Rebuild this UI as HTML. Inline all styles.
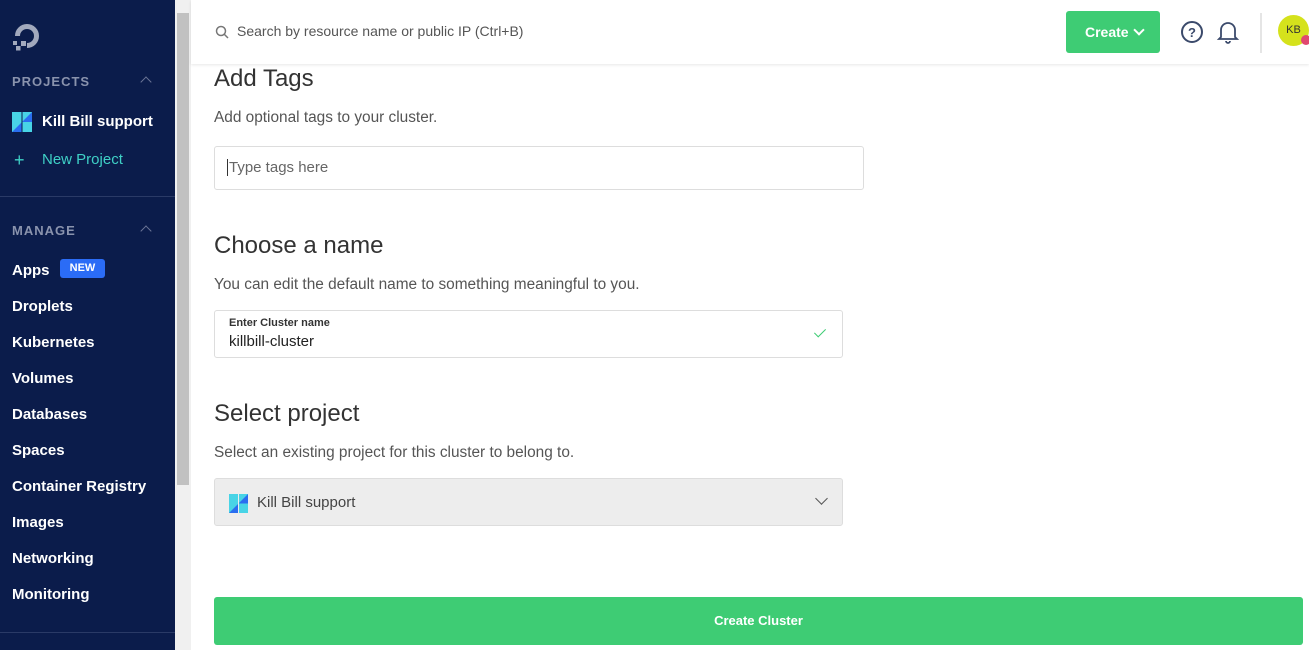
<!DOCTYPE html>
<html><head><style>
*{margin:0;padding:0;box-sizing:border-box}
body{width:1309px;height:650px;overflow:hidden;font-family:"Liberation Sans",sans-serif;background:#fff;position:relative}
.sb{position:absolute;left:0;top:0;width:175px;height:650px;background:#0b1c4b;color:#fff}
.sb .h{position:absolute;left:12px;font-size:13px;font-weight:bold;letter-spacing:1px;color:#8a93ad}
.sb .car{position:absolute;left:142px;width:8px;height:8px;border-left:1.5px solid #6b7596;border-top:1.5px solid #6b7596;transform:rotate(45deg)}
.sb .it{position:absolute;left:12px;font-size:15px;font-weight:bold}
.scr{position:absolute;left:175px;top:0;width:16px;height:650px;background:#f0f0f0}
.thumb{position:absolute;left:177px;top:13px;width:12px;height:472px;background:#c1c1c1}
.top{position:absolute;left:191px;top:0;right:0;height:64px;background:#fff;box-shadow:0 1px 3px rgba(0,0,0,.1)}
h2{position:absolute;left:214px;font-size:24px;font-weight:normal;color:#333}
.p{position:absolute;left:214px;font-size:15.4px;color:#555}
.inp{position:absolute;left:214px;border:1px solid #ddd;border-radius:3px;background:#fff}
</style></head><body>
<div class="sb">
<svg style="position:absolute;left:10px;top:20px" width="34" height="34" viewBox="0 0 34 34"><path d="M7.5 16 A9.5 9.5 0 1 1 17 25.5" fill="none" stroke="#a2a9bd" stroke-width="5"/><rect x="11" y="21" width="5" height="5" fill="#a2a9bd"/><rect x="6" y="26" width="4.5" height="4.5" fill="#a2a9bd"/><rect x="3" y="21" width="4" height="4" fill="#a2a9bd"/></svg>
<div class="h" style="top:74px">PROJECTS</div><div class="car" style="top:78px"></div>
<svg style="position:absolute;left:12px;top:112px" width="20" height="20"><rect width="20" height="20" fill="#48d4e6"/><path d="M0 20 L10 10 V20Z M10 10 L20 0 V10Z" fill="#2a6ef0"/><path d="M10 0 V20" stroke="#0b1c4b" stroke-width="1"/></svg>
<div class="it" style="left:42px;top:113px">Kill Bill support</div>
<div class="it" style="left:14px;top:150px;color:#3fd0c6;font-weight:normal;font-size:18px">+</div>
<div class="it" style="left:42px;top:151px;color:#3fd0c6;font-weight:normal">New Project</div>
<div style="position:absolute;left:0;top:196px;width:175px;height:1px;background:#2a3a66"></div>
<div class="h" style="top:223px">MANAGE</div><div class="car" style="top:227px"></div>
<div class="it" style="top:262px">Apps</div>
<div style="position:absolute;left:60px;top:259px;width:45px;height:19px;background:#2b6cf6;border-radius:3px;font-size:11px;font-weight:bold;text-align:center;line-height:19px">NEW</div>
<div class="it" style="top:298px">Droplets</div>
<div class="it" style="top:334px">Kubernetes</div>
<div class="it" style="top:370px">Volumes</div>
<div class="it" style="top:406px">Databases</div>
<div class="it" style="top:442px">Spaces</div>
<div class="it" style="top:478px">Container Registry</div>
<div class="it" style="top:514px">Images</div>
<div class="it" style="top:550px">Networking</div>
<div class="it" style="top:586px">Monitoring</div>
<div style="position:absolute;left:0;top:632px;width:175px;height:1px;background:#2a3a66"></div>
</div>
<div class="scr"></div><div class="thumb"></div>
<div class="top">
<svg style="position:absolute;left:24px;top:25px" width="14" height="14"><circle cx="6" cy="6" r="4.5" fill="none" stroke="#777" stroke-width="1.5"/><path d="M9 9l4 4" stroke="#777" stroke-width="1.5"/></svg>
<div style="position:absolute;left:46px;top:23px;font-size:14px;color:#555">Search by resource name or public IP (Ctrl+B)</div>
<div style="position:absolute;left:875px;top:11px;width:94px;height:42px;background:#3ecc74;border-radius:3px;color:#fff;font-weight:bold;font-size:14px;line-height:42px;padding-left:19px">Create<span style="display:inline-block;width:8px;height:8px;border-right:2px solid #fff;border-bottom:2px solid #fff;transform:rotate(45deg);margin-left:6px;position:relative;top:-3px"></span></div>
<svg style="position:absolute;left:989px;top:20px" width="24" height="24"><circle cx="12" cy="12" r="10" fill="none" stroke="#3b4a6b" stroke-width="2"/><text x="12" y="17" font-size="13" font-weight="bold" text-anchor="middle" fill="#3b4a6b" font-family="Liberation Sans">?</text></svg>
<svg style="position:absolute;left:1025px;top:19px" width="24" height="26"><path d="M5 18 V11 A7 7 0 0 1 19 11 V18 L21 20 H3Z" fill="none" stroke="#3b4a6b" stroke-width="1.8"/><path d="M10 22a2 2 0 0 0 4 0" fill="none" stroke="#3b4a6b" stroke-width="1.8"/></svg>
<div style="position:absolute;left:1069px;top:13px;width:2px;height:40px;background:#e5e5e5"></div>
<div style="position:absolute;left:1087px;top:15px;width:31px;height:31px;border-radius:50%;background:#d5e21c;font-size:11px;color:#333;text-align:center;line-height:31px">KB</div>
<div style="position:absolute;left:1110px;top:35px;width:10px;height:10px;border-radius:50%;background:#e04870"></div>
</div>
<h2 style="top:65px">Add Tags</h2>
<div class="p" style="top:109px">Add optional tags to your cluster.</div>
<div class="inp" style="top:146px;width:650px;height:44px"><div style="position:absolute;left:12px;top:12px;font-size:15px;color:#666;border-left:1px solid #333;padding-left:1px">Type tags here</div></div>
<h2 style="top:232px">Choose a name</h2>
<div class="p" style="top:276px">You can edit the default name to something meaningful to you.</div>
<div class="inp" style="top:310px;width:629px;height:48px"><div style="position:absolute;left:14px;top:6px;font-size:11px;font-weight:bold;color:#333">Enter Cluster name</div><div style="position:absolute;left:14px;top:22px;font-size:15px;color:#222">killbill-cluster</div><div style="position:absolute;left:602px;top:15px;width:6px;height:11px;border-right:1.5px solid #3ecc74;border-bottom:1.5px solid #3ecc74;transform:rotate(45deg)"></div></div>
<h2 style="top:400px">Select project</h2>
<div class="p" style="top:444px">Select an existing project for this cluster to belong to.</div>
<div class="inp" style="top:478px;width:629px;height:48px;background:#ededed"><svg style="position:absolute;left:14px;top:15px" width="19" height="19"><rect width="19" height="19" fill="#48d4e6"/><path d="M0 19 L9.5 9.5 V19Z M9.5 9.5 L19 0 V9.5Z" fill="#2a6ef0"/><path d="M9.5 0 V19" stroke="#ededed"/></svg><div style="position:absolute;left:42px;top:15px;font-size:15px;color:#444">Kill Bill support</div><div style="position:absolute;left:602px;top:15px;width:9px;height:9px;border-right:1.5px solid #555;border-bottom:1.5px solid #555;transform:rotate(45deg)"></div></div>
<div style="position:absolute;left:214px;top:597px;width:1089px;height:48px;background:#3ecc74;border-radius:3px;color:#fff;font-weight:bold;font-size:13px;text-align:center;line-height:48px">Create Cluster</div>
</body></html>
